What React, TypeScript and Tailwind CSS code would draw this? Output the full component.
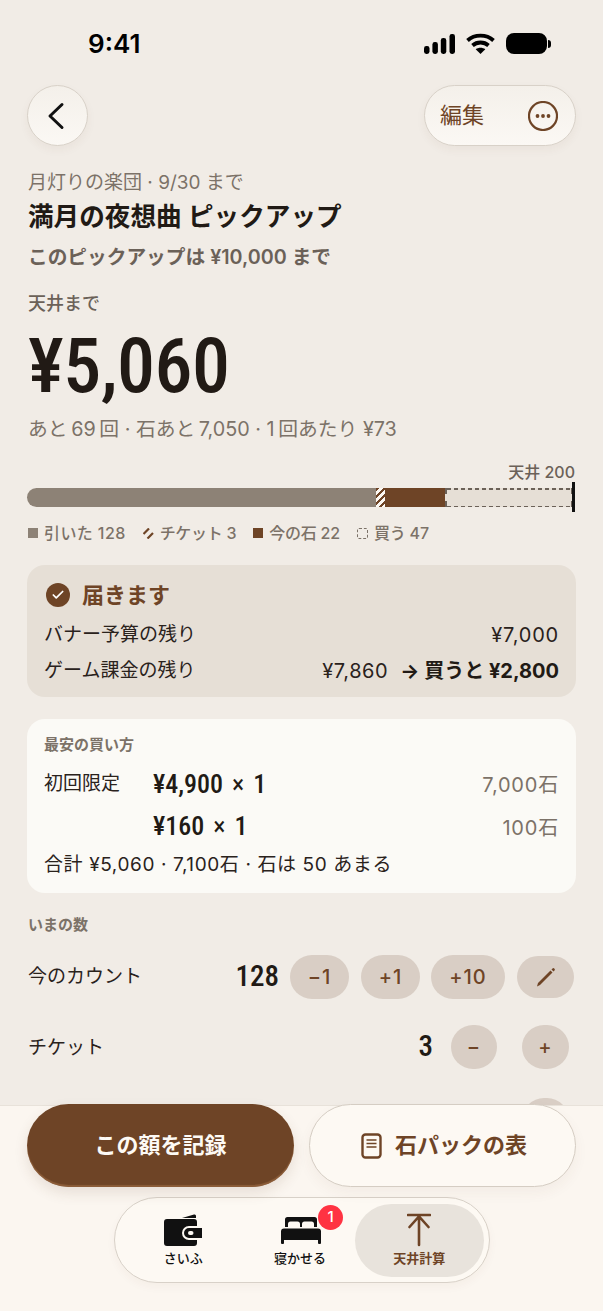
import React from 'react';
import { Check } from 'lucide-react';

const sans = 'font-[Inter,"Noto_Sans_CJK_JP",sans-serif]';
const din = 'font-[Roboto,"Noto_Sans_CJK_JP",sans-serif] [font-stretch:75%]';

const StatusBar = () => (
  <div className="flex h-[85px] items-start justify-between pt-[27px] pl-[88px] pr-[52px]">
    <span className="text-[26px] leading-[34px] font-semibold text-black">9:41</span>
    <div className="flex items-center gap-[11px] pt-[6px]">
      <svg width="31" height="20" viewBox="0 0 31 20" fill="#000">
        <rect x="0" y="12" width="5.500" height="8" rx="2.400" />
        <rect x="8.400" y="8" width="5.500" height="12" rx="2.400" />
        <rect x="16.800" y="4" width="5.500" height="16" rx="2.400" />
        <rect x="25.500" y="0" width="5.500" height="20" rx="2.400" />
      </svg>
      <svg width="29" height="21" viewBox="0 0 29 21" fill="none" stroke="#000" strokeWidth="3.800">
        <path d="M1.500 7.500c7-6.500 19-6.500 26 0" />
        <path d="M6.500 12.500c4.500-4 11.500-4 16 0" />
        <path d="M14.500 21l-4.800-4.700c2.800-2 6.800-2 9.600 0z" fill="#000" stroke="none" />
      </svg>
      <div className="flex items-center">
        <div className="h-[21px] w-[41px] rounded-[8px] bg-black" />
        <div className="ml-[1px] h-[8px] w-[3px] rounded-r-full bg-black" />
      </div>
    </div>
  </div>
);

const RoundButton = ({ label, className }: { label: React.ReactNode; className: string }) => (
  <div className={`flex items-center justify-center bg-[#d9cec5] text-[20px] font-medium tracking-[1px] text-[#6e4426] ${className}`}>
    {label}
  </div>
);

const LegendItem = ({ mark, label, className }: { mark: React.ReactNode; label: string; className?: string }) => (
  <div className="flex items-center gap-[6px]">
    {mark}
    <span className={className}>{label}</span>
  </div>
);

const DashLine = () => (
  <div className="h-[1.5px] bg-[repeating-linear-gradient(90deg,#6b6158_0,#6b6158_4px,transparent_4px,transparent_7px)]" />
);

const Panel = () => (
  <div className="absolute inset-x-0 bottom-0 h-[206px] border-t border-[#e8e2da] bg-[#fbf6f0]">
    <div className="flex justify-between px-[27px]">
      <div className="-mt-[2px] flex h-[83px] w-[267px] items-center justify-center rounded-full bg-[#6e4426] text-[22px] font-bold text-[#fdfaf5] shadow-[0_6px_14px_rgba(90,60,30,0.12),inset_0_-2px_1px_rgba(160,110,70,0.6)]">
        この額を記録
      </div>
      <div className="-mt-[2px] flex h-[83px] w-[267px] items-center justify-center gap-[13px] rounded-full border border-[#d5cdc3] bg-[#fdf9f3] pl-[3px] text-[22px] font-bold text-[#6e4426] shadow-[0_6px_14px_rgba(90,60,30,0.05)]">
        <svg width="21" height="26" viewBox="0 0 21 26" fill="none" stroke="#6e4426" strokeWidth="2.400">
          <rect x="1.500" y="1.500" width="18" height="23" rx="3" />
          <path d="M5.500 7h10M5.500 10.500h10M5.500 14h10" strokeWidth="1.600" />
        </svg>
        <span>石パックの表</span>
      </div>
    </div>
    <div className="mx-auto mt-[10px] flex h-[86px] w-[376px] items-center rounded-full border border-[#d8d1c8] bg-[#fdf9f3] pl-[14px] pr-[5px] shadow-[0_4px_10px_rgba(90,60,30,0.04)]">
      <div className="flex w-[110px] flex-col items-center">
        <svg width="38" height="32" viewBox="0 0 38 32" fill="#111">
          <path d="M18 4 L30 .5 Q32 0 32 2 L32 4z" />
          <path d="M3 5h27a3 3 0 0 1 3 3v4H25a7 7 0 0 0 0 14h8v3a3 3 0 0 1-3 3H3a3 3 0 0 1-3-3V8a3 3 0 0 1 3-3z" />
          <path d="M25 14h13v10H25a5 5 0 0 1 0-10zm1 3a2 2 0 1 0 0 4h1.500a2 2 0 0 0 0-4z" fillRule="evenodd" />
        </svg>
        <span className="mt-[3px] text-[13px] leading-[18px] font-medium text-[#111]">さいふ</span>
      </div>
      <div className="relative ml-[7px] flex w-[110px] flex-col items-center">
        <svg width="40" height="27" viewBox="0 0 40 27" fill="#111" className="ml-[2px] mt-[3px]">
          <path d="M4 2.500A2.500 2.500 0 0 1 6.500 0h27A2.500 2.500 0 0 1 36 2.500V10h-3V7q0-2.500-2.500-2.500h-7q-2.500 0-2.500 2.500v3h-2V7q0-2.500-2.500-2.500h-7Q7 4.500 7 7v3H4z" />
          <path d="M3 11.500h34a3 3 0 0 1 3 3V23H0v-8.500a3 3 0 0 1 3-3z" />
          <rect x="0" y="22" width="3" height="5" rx="1" />
          <rect x="37" y="22" width="3" height="5" rx="1" />
        </svg>
        <span className="mt-[5px] text-[13px] leading-[18px] font-medium text-[#111]">寝かせる</span>
        <div className="absolute left-[73px] -top-[9px] flex h-[25px] w-[25px] items-center justify-center rounded-full bg-[#ff3342] text-[15px] font-medium text-white">
          1
        </div>
      </div>
      <div className="ml-auto flex h-[73px] w-[129px] flex-col items-center rounded-full bg-[#e8e3dc] pt-[9px]">
        <svg width="24" height="34" viewBox="0 0 24 34" fill="none" stroke="#6e4426" strokeWidth="2.600" strokeLinecap="round">
          <path d="M1 2h22M12 32V3M2.500 14L12 3.500 21.500 14" />
        </svg>
        <span className="mt-[2px] text-[13px] leading-[18px] font-semibold text-[#6e4426]">天井計算</span>
      </div>
    </div>
  </div>
);

export default function App() {
  return (
    <div className={`relative h-[1311px] overflow-hidden bg-[#f1ece6] ${sans}`}>
      <StatusBar />

      <div className="flex items-center justify-between px-[27px]">
        <div className="flex h-[61px] w-[61px] items-center justify-center rounded-full border border-[#d8d1c8] bg-gradient-to-b from-[#f4f0ea] to-[#fbf8f4] pr-[4px] shadow-[0_4px_10px_rgba(90,60,30,0.05)]">
          <svg width="18" height="28" viewBox="0 0 18 28" fill="none" stroke="#111" strokeWidth="3" strokeLinecap="round" strokeLinejoin="round">
            <path d="M15 2.500L3 14l12 11.500" />
          </svg>
        </div>
        <div className="flex h-[61px] w-[152px] items-center justify-between rounded-full border border-[#d8d1c8] bg-gradient-to-b from-[#f4f0ea] to-[#fbf8f4] pl-[15px] pr-[17px] shadow-[0_4px_10px_rgba(90,60,30,0.05)]">
          <span className="text-[22px] text-[#6e4426]">編集</span>
          <svg width="30" height="30" viewBox="0 0 30 30" fill="#6e4426">
            <circle cx="15" cy="15" r="14" fill="none" stroke="#6e4426" strokeWidth="2.200" />
            <circle cx="9.500" cy="15" r="1.900" />
            <circle cx="15" cy="15" r="1.900" />
            <circle cx="20.500" cy="15" r="1.900" />
          </svg>
        </div>
      </div>

      <div className="px-[28px]">
        <p className="mt-[24px] text-[19px] leading-[26px] text-[#7c7268]">月灯りの楽団 · 9/30 まで</p>
        <h1 className="mt-[4px] text-[25.6px] leading-[34px] font-semibold text-[#211a15]">満月の夜想曲 ピックアップ</h1>
        <p className="mt-[10px] text-[19.7px] leading-[26px] font-semibold text-[#6b6158]">このピックアップは ¥10,000 まで</p>
        <p className="mt-[21px] text-[18px] leading-[26px] font-medium text-[#6b6158]">天井まで</p>
        <p className={`mt-[9px] text-[76px] leading-[80px] font-medium tracking-[-0.5px] text-[#211a15] ${din}`}>¥5,060</p>
        <p className="mt-[10px] text-[19.8px] leading-[26px] text-[#7c7268]">{'あと\u200969\u2009回 · 石あと\u20097,050 · 1\u2009回あたり ¥73'}</p>

        <p className="mt-[19px] text-right text-[16px] leading-[22px] font-medium text-[#6b6158]">天井 200</p>

        <div className="relative -ml-px mt-[5px] flex h-[19px] w-[546px]">
          <div className="w-[349px] rounded-l-full bg-[#8d8276]" />
          <div className="w-[9px] bg-[repeating-linear-gradient(135deg,#6e4426_0,#6e4426_2.500px,#fbf8f3_2.500px,#fbf8f3_5px)]" />
          <div className="w-[60px] bg-[#6e4426]" />
          <div className="flex flex-1 flex-col justify-between border-x-2 border-dashed border-x-[#6b6158] bg-[#e6dfd6]">
            <DashLine />
            <DashLine />
          </div>
          <div className="absolute -right-[2px] -top-[6px] h-[30px] w-[3px] bg-[#111]" />
        </div>

        <div className="mt-[15px] flex gap-[17px] text-[16px] leading-[22px] font-medium text-[#7c7268]">
          <LegendItem mark={<div className="h-[10px] w-[10px] bg-[#8d8276]" />} label="引いた 128" className="tracking-[0.4px]" />
          <LegendItem
            mark={
              <svg width="11" height="11" viewBox="0 0 11 11" fill="none" stroke="#6e4426" strokeWidth="2.200">
                <path d="M0.500 6L6 0.500M4.500 10.500L10 5" />
              </svg>
            }
            label="チケット 3"
            className="tracking-[-0.3px]"
          />
          <LegendItem mark={<div className="h-[10px] w-[10px] bg-[#6e4426]" />} label="今の石 22" className="tracking-[-0.2px]" />
          <LegendItem mark={<div className="h-[11px] w-[11px] rounded-[2px] border-[1.5px] border-dashed border-[#7c7268]" />} label="買う 47" className="tracking-[-0.2px]" />
        </div>
      </div>

      <div className="mx-[27px] mt-[21px] h-[132px] rounded-[18px] bg-[#e6dfd6] px-[17px] pt-[15px]">
        <div className="flex items-center gap-[12px] pl-[2px]">
          <div className="flex h-[24px] w-[24px] items-center justify-center rounded-full bg-[#6e4426]">
            <Check size={14} color="#fff" strokeWidth={3} />
          </div>
          <span className="text-[22px] leading-[30px] font-semibold text-[#6e4426]">届きます</span>
        </div>
        <div className="mt-[11px] flex justify-between text-[19px] leading-[28px] text-[#2a221c]">
          <span>バナー予算の残り</span>
          <span className="text-[20px] tracking-[0.8px]">¥7,000</span>
        </div>
        <div className="mt-[8px] flex justify-between text-[19px] leading-[28px] text-[#2a221c]">
          <span>ゲーム課金の残り</span>
          <span className="text-[20px] tracking-[0.6px]">
            ¥7,860<span className="ml-[12px] font-bold tracking-normal text-[#211a15]">→ 買うと ¥2,800</span>
          </span>
        </div>
      </div>

      <div className="mx-[27px] mt-[22px] h-[174px] rounded-[18px] bg-[#fbfaf6] px-[17px] pt-[16px]">
        <p className="text-[15px] leading-[20px] font-semibold text-[#7c7268]">最安の買い方</p>
        <div className="mt-[8px] flex h-[42px] items-center text-[#2a221c]">
          <span className="w-[109px] text-[19px]">初回限定</span>
          <span className={`text-[26px] font-medium [word-spacing:3px] text-[#211a15] ${din}`}>¥4,900 <span className="font-normal">×</span> 1</span>
          <span className="ml-auto pt-[2px] text-[20px] tracking-[0.8px] text-[#7c7268]">7,000石</span>
        </div>
        <div className="flex h-[43px] items-center">
          <span className={`ml-[109px] text-[26px] font-medium [word-spacing:3px] text-[#211a15] ${din}`}>¥160 <span className="font-normal">×</span> 1</span>
          <span className="ml-auto pt-[2px] text-[20px] tracking-[0.8px] text-[#7c7268]">100石</span>
        </div>
        <p className="mt-[4px] text-[19px] leading-[26px] tracking-[0.6px] text-[#2a221c]">合計 ¥5,060 · 7,100石 · 石は 50 あまる</p>
      </div>

      <div className="px-[28px]">
        <p className="mt-[21px] text-[15px] leading-[22px] font-semibold text-[#7c7268]">いまの数</p>
        <div className="mt-[19px] flex h-[44px] items-center">
          <span className="pt-[1px] text-[19px] text-[#2a221c]">今のカウント</span>
          <span className={`ml-auto mr-[11px] text-[29px] font-medium text-[#211a15] ${din}`}>128</span>
          <RoundButton label="−1" className="h-[44px] w-[59px] rounded-[22px]" />
          <RoundButton label="+1" className="ml-[12px] h-[44px] w-[59px] rounded-[22px]" />
          <RoundButton label="+10" className="ml-[11px] h-[44px] w-[74px] rounded-[22px]" />
          <RoundButton
            label={
              <svg width="20" height="20" viewBox="0 0 20 20" fill="#6e4426" stroke="none">
                <path d="M1 19.500l1-3.500L14.500 3.500l2 2L4 18z" />
                <path d="M15.500 2.500l1-1a1.200 1.200 0 0 1 1.700 0l.3.300a1.200 1.200 0 0 1 0 1.700l-1 1z" />
              </svg>
            }
            className="ml-[12px] mr-px h-[42px] w-[57px] rounded-[21px]"
          />
        </div>
        <div className="mt-[26px] flex h-[44px] items-center">
          <span className="pt-[2px] text-[19px] text-[#2a221c]">チケット</span>
          <span className={`ml-auto mr-[18px] text-[29px] font-medium text-[#211a15] ${din}`}>3</span>
          <RoundButton label="−" className="h-[44px] w-[46px] rounded-full" />
          <RoundButton label="+" className="ml-[25px] mr-[6px] h-[44px] w-[47px] rounded-full" />
        </div>
        <div className="mt-[29px] flex justify-end">
          <div className="mr-[6px] h-[44px] w-[47px] rounded-full bg-[#d9cec5]" />
        </div>
      </div>

      <Panel />
    </div>
  );
}
